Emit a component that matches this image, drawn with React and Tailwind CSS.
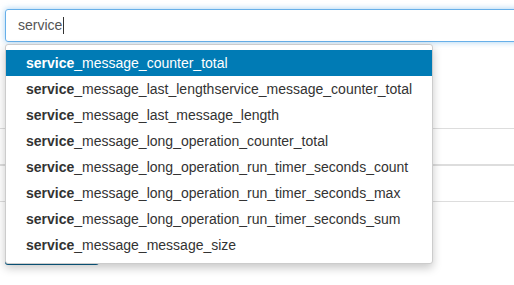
import React from "react";

const items = [
  "_message_counter_total",
  "_message_last_lengthservice_message_counter_total",
  "_message_last_message_length",
  "_message_long_operation_counter_total",
  "_message_long_operation_run_timer_seconds_count",
  "_message_long_operation_run_timer_seconds_max",
  "_message_long_operation_run_timer_seconds_sum",
  "_message_message_size",
];

export default function App() {
  return (
    <div
      className="relative w-[514px] h-[285px] overflow-hidden bg-white"
      style={{ fontFamily: '"Liberation Sans", Arial, sans-serif' }}
    >
      <div className="pt-[9px] pl-[5px]">
        <div className="w-[530px] h-[33px] border border-[#66afe9] rounded-[3px] shadow-[0_0_6px_rgba(102,175,233,0.6)] flex items-center pl-[12px] text-[14px] text-[#555]">
          <span>service</span>
          <span className="w-px h-[17px] bg-[#333] ml-px"></span>
        </div>
      </div>
      <div className="flex flex-col">
        <div className="h-[86px]"></div>
        <div className="h-px bg-[#ddd]"></div>
        <div className="h-[35px]"></div>
        <div className="h-[2px] bg-[#ddd]"></div>
        <div className="h-[35px]"></div>
        <div className="h-px bg-[#ddd]"></div>
        <div className="h-[30px]"></div>
        <div className="ml-[5px] w-[94px] h-[33px] bg-[#0b5f8a] rounded-[3px]"></div>
      </div>

      <div className="absolute top-[44px] left-[5px] w-[428px] h-[220px] bg-white border border-[#ccc] rounded-[3px] shadow-[0_4px_10px_rgba(0,0,0,0.22)] pt-[5px]">
        {items.map((t, i) => (
          <div
            key={i}
            className={
              "h-[26px] flex items-center pl-[20px] text-[14px] whitespace-nowrap " +
              (i === 0 ? "bg-[#007bb5] text-white" : "text-[#333]")
            }
          >
            <b>service</b>
            <span>{t}</span>
          </div>
        ))}
      </div>
    </div>
  );
}
